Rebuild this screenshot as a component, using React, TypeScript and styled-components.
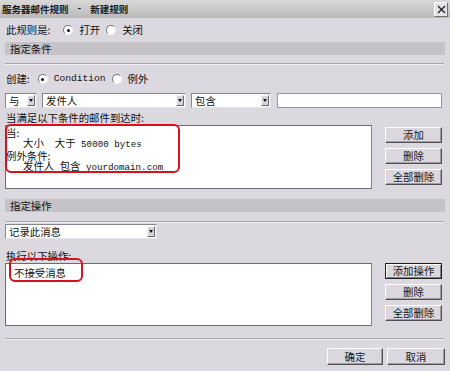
import styled, { createGlobalStyle } from "styled-components";

const GlobalStyle = createGlobalStyle`
  html, body {
    margin: 0;
    padding: 0;
    background: #dcd8e0;
  }
  body {
    font-family: "Noto Sans CJK SC", "Noto Sans", sans-serif;
    font-size: 10.4px;
    color: #101010;
  }
`;

export default function App() {
  return (
    <>
      <GlobalStyle />
      <Dialog>
        <TitleBar>
          <TitleText>
            服务器邮件规则<Dash>-</Dash>新建规则
          </TitleText>
          <CloseBox>
            <svg width="9" height="9" viewBox="0 0 9 9">
              <path d="M1 1L8 8M8 1L1 8" stroke="#202020" strokeWidth="1.4" />
            </svg>
          </CloseBox>
        </TitleBar>

        <Body>
          <Row style={{ marginTop: 4 }}>
            <Label>此规则是:</Label>
            <Radio $checked $gap={13} />
            <Label>打开</Label>
            <Radio $gap={6} />
            <Label>关闭</Label>
          </Row>

          <SectionBand $top={4}>指定条件</SectionBand>
          <Divider $top={8} />

          <Row style={{ marginTop: 6 }}>
            <Label>创建:</Label>
            <Radio $checked $gap={8} />
            <Mono>Condition</Mono>
            <Radio $gap={6} />
            <Label>例外</Label>
          </Row>

          <FieldRow>
            <Select $width={32}>
              <span>与</span>
              <DropButton />
            </Select>
            <Select $width={144}>
              <span>发件人</span>
              <DropButton />
            </Select>
            <Select $width={80}>
              <span>包含</span>
              <DropButton />
            </Select>
            <TextInput />
          </FieldRow>

          <ListLabel $top={3}>当满足以下条件的邮件到达时:</ListLabel>
          <ListRow>
            <ListBox $height={64}>
              <ListLine>当:</ListLine>
              <ListLine $indent={17}>
                大小<Mono $small>{"  "}</Mono>大于<Mono $small> 50000 bytes</Mono>
              </ListLine>
              <ListLine>例外条件:</ListLine>
              <ListLine $indent={17}>
                发件人<Mono $small> </Mono>包含<Mono $small> yourdomain.com</Mono>
              </ListLine>
              <Annotation style={{ left: -1, top: -2, width: 175, height: 49 }} />
            </ListBox>
            <ButtonColumn $top={2}>
              <Button>添加</Button>
              <Button>删除</Button>
              <Button>全部删除</Button>
            </ButtonColumn>
          </ListRow>

          <SectionBand $top={10}>指定操作</SectionBand>
          <Divider $top={9} />

          <FieldRow style={{ marginTop: 1 }}>
            <Select $width={152}>
              <span>记录此消息</span>
              <DropButton />
            </Select>
          </FieldRow>

          <ListLabel $top={10}>执行以下操作:</ListLabel>
          <ListRow>
            <ListBox $height={63}>
              <ListLine $indent={8} style={{ marginTop: 2 }}>
                不接受消息
              </ListLine>
              <Annotation style={{ left: 3, top: -6, width: 74, height: 24 }} />
            </ListBox>
            <ButtonColumn $top={0}>
              <Button $primary>添加操作</Button>
              <Button>删除</Button>
              <Button>全部删除</Button>
            </ButtonColumn>
          </ListRow>

          <Divider $top={12} />

          <Footer>
            <Button $width={56} $height={17}>
              确定
            </Button>
            <Button $width={58} $height={17}>
              取消
            </Button>
          </Footer>
        </Body>
      </Dialog>
    </>
  );
}

const Dialog = styled.div`
  width: 450px;
  height: 371px;
  display: flex;
  flex-direction: column;
  background: #dcd8e0;
  overflow: hidden;
`;

const TitleBar = styled.div`
  height: 18px;
  display: flex;
  align-items: center;
  justify-content: space-between;
  padding: 0 2px 0 2px;
  background: linear-gradient(#d8d8d8, #c6c6c6 60%, #b9b9b9);
`;

const TitleText = styled.div`
  display: flex;
  align-items: center;
  font-size: 9.5px;
  font-weight: bold;
  line-height: 18px;
  color: #1a1a1a;
`;

const Dash = styled.span`
  margin: 0 8px;
  font-family: "Liberation Mono", monospace;
`;

const CloseBox = styled.div`
  width: 12px;
  height: 13px;
  display: flex;
  align-items: center;
  justify-content: center;
  background: #e4e4e8;
  border: 1px solid;
  border-color: #ffffff #707070 #707070 #ffffff;
`;

const Body = styled.div`
  display: flex;
  flex-direction: column;
  padding: 0 5px;
`;

const Row = styled.div`
  height: 16px;
  display: flex;
  align-items: center;
  padding-left: 1px;
`;

const Label = styled.span`
  font-size: 10.4px;
  line-height: 16px;
  white-space: pre;
`;

const Mono = styled.span<{ $small?: boolean }>`
  font-family: "Liberation Mono", monospace;
  font-size: ${(p) => (p.$small ? "9.2px" : "9.6px")};
  white-space: pre;
  line-height: ${(p) => (p.$small ? "inherit" : "16px")};
`;

const Radio = styled.span<{ $checked?: boolean; $gap: number }>`
  width: 8px;
  height: 8px;
  margin: 0 6px 0 ${(p) => p.$gap}px;
  border-radius: 50%;
  border: 1px solid;
  border-color: #7a7a7a #f4f4f4 #f4f4f4 #7a7a7a;
  background: #ffffff;
  display: flex;
  align-items: center;
  justify-content: center;
  &::after {
    content: "";
    width: 3px;
    height: 3px;
    border-radius: 50%;
    background: ${(p) => (p.$checked ? "#101010" : "transparent")};
  }
`;

const SectionBand = styled.div<{ $top: number }>`
  margin-top: ${(p) => p.$top}px;
  height: 13px;
  line-height: 13px;
  padding-left: 5px;
  background: #c5c2c8;
  font-size: 10.4px;
`;

const Divider = styled.div<{ $top: number }>`
  margin-top: ${(p) => p.$top}px;
  margin-right: 1px;
  height: 0;
  border-top: 1px solid #a9a5ad;
  border-bottom: 1px solid #f2f0f4;
`;

const FieldRow = styled.div`
  margin-top: 6px;
  display: flex;
  align-items: center;
  gap: 6px;
`;

const Select = styled.div<{ $width: number }>`
  width: ${(p) => p.$width}px;
  height: 15px;
  box-sizing: border-box;
  display: flex;
  align-items: center;
  justify-content: space-between;
  padding: 0 1px 0 3px;
  background: #ffffff;
  border: 1px solid;
  border-color: #8a868e #e6e4e8 #e6e4e8 #8a868e;
  font-size: 10.4px;
  line-height: 13px;
  & + & {
    margin-left: -1px;
  }
`;

const DropButton = styled.span`
  width: 8px;
  height: 11px;
  box-sizing: border-box;
  background: #d8d4dc;
  border: 1px solid;
  border-color: #f8f8f8 #6c6870 #6c6870 #f8f8f8;
  display: flex;
  align-items: center;
  justify-content: center;
  &::after {
    content: "";
    border-left: 2.5px solid transparent;
    border-right: 2.5px solid transparent;
    border-top: 3px solid #101010;
  }
`;

const TextInput = styled.div`
  width: 165px;
  height: 15px;
  box-sizing: border-box;
  background: #ffffff;
  border: 1px solid #9a969e;
`;

const ListLabel = styled.div<{ $top: number }>`
  margin-top: ${(p) => p.$top}px;
  height: 14px;
  line-height: 14px;
  font-size: 10.4px;
  padding-left: 1px;
`;

const ListRow = styled.div`
  display: grid;
  grid-template-columns: 367px 57px;
  column-gap: 13px;
  align-items: start;
`;

const ListBox = styled.div<{ $height: number }>`
  position: relative;
  height: ${(p) => p.$height}px;
  box-sizing: border-box;
  padding-top: 2px;
  background: #ffffff;
  border: 1px solid;
  border-color: #6e6a72 #8a868e #6e6a72 #6e6a72;
`;

const ListLine = styled.div<{ $indent?: number }>`
  padding-left: ${(p) => p.$indent ?? 0}px;
  font-size: 10.4px;
  line-height: 10.4px;
  white-space: pre;
`;

const Annotation = styled.div`
  position: absolute;
  box-sizing: border-box;
  border: 2px solid #d8101c;
  border-radius: 6px;
  pointer-events: none;
`;

const ButtonColumn = styled.div<{ $top: number }>`
  margin-top: ${(p) => p.$top}px;
  display: flex;
  flex-direction: column;
  gap: 5px;
`;

const Button = styled.div<{ $primary?: boolean; $width?: number; $height?: number }>`
  width: ${(p) => (p.$width ? `${p.$width}px` : "100%")};
  height: ${(p) => p.$height ?? 16}px;
  box-sizing: border-box;
  display: flex;
  align-items: center;
  justify-content: center;
  background: #dbd7df;
  border: 1px solid;
  border-color: ${(p) =>
    p.$primary ? "#202020" : "#ffffff #505050 #505050 #ffffff"};
  box-shadow: ${(p) =>
    p.$primary
      ? "inset 1px 1px #ffffff, inset -1px -1px #808080"
      : "inset -1px -1px #a09ca4"};
  font-size: 10.4px;
  line-height: 14px;
  color: #181818;
`;

const Footer = styled.div`
  margin-top: 8px;
  display: flex;
  justify-content: flex-end;
  gap: 4px;
`;
